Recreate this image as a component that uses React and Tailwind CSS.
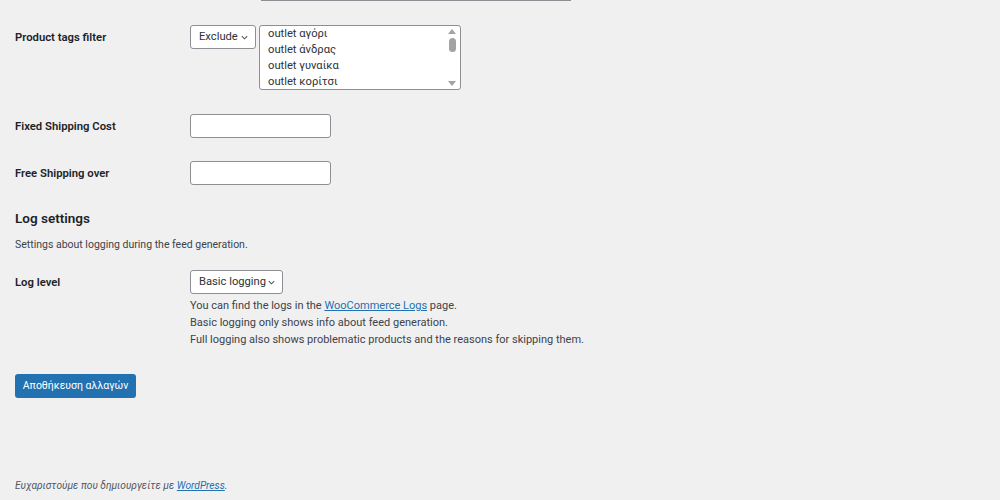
import React from 'react';

const font = { fontFamily: 'Roboto, "Open Sans", sans-serif' };

const Chevron = () => (
  <svg width="9" height="9" viewBox="0 0 20 20" className="shrink-0">
    <path d="M4 7l6 6 6-6" fill="none" stroke="#50575e" strokeWidth="2.4" />
  </svg>
);

const Select = ({ label, width }) => (
  <div
    className={`flex items-center justify-between h-6 pl-2 pr-[6px] bg-white border border-[#8c8f94] rounded-[3px] text-[11.2px] text-[#2c3338] whitespace-nowrap ${width}`}
  >
    <span>{label}</span>
    <Chevron />
  </div>
);

const Row = ({ label, children, className = '' }) => (
  <div className={`flex ${className}`}>
    <div className="w-[175px] shrink-0 text-[11.3px] font-semibold text-[#1d2327] leading-[26px]">{label}</div>
    <div className="flex-1">{children}</div>
  </div>
);

const tags = ['outlet αγόρι', 'outlet άνδρας', 'outlet γυναίκα', 'outlet κορίτσι'];

export default function App() {
  return (
    <div className="w-[1000px] h-[500px] bg-[#f0f0f1] overflow-hidden relative text-[#3c434a]" style={font}>
      <div className="h-px w-[310px] ml-[261px] bg-[#8c8f94]" />
      <div className="px-[15px]">
        <Row label="Product tags filter" className="mt-6">
          <div className="flex gap-[3px] items-start">
            <Select label="Exclude" width="w-[66px]" />
            <div className="w-[202px] h-[65px] bg-white border border-[#8c8f94] rounded-[3px] flex">
              <div className="flex-1 pl-2 text-[11.2px] text-[#2c3338] leading-4">
                {tags.map((t) => (
                  <div key={t}>{t}</div>
                ))}
              </div>
              <div className="w-[12px] mr-[2px] flex flex-col items-center py-[3px]">
                <div className="w-0 h-0 border-l-[4px] border-r-[4px] border-b-[5px] border-l-transparent border-r-transparent border-b-[#a3a3a3]" />
                <div className="w-[7px] h-[14px] rounded-full bg-[#a3a3a3] mt-[4px]" />
                <div className="flex-1" />
                <div className="w-0 h-0 border-l-[4px] border-r-[4px] border-t-[5px] border-l-transparent border-r-transparent border-t-[#a3a3a3]" />
              </div>
            </div>
          </div>
        </Row>

        <Row label="Fixed Shipping Cost" className="mt-6">
          <div className="w-[141px] h-6 bg-white border border-[#8c8f94] rounded-[3px]" />
        </Row>

        <Row label="Free Shipping over" className="mt-[21px]">
          <div className="w-[141px] h-6 bg-white border border-[#8c8f94] rounded-[3px]" />
        </Row>

        <h2 className="mt-[21px] text-[13.5px] font-semibold text-[#1d2327] leading-5">Log settings</h2>
        <p className="mt-[9px] text-[10.5px] leading-4">Settings about logging during the feed generation.</p>

        <Row label="Log level" className="mt-[17px]">
          <Select label="Basic logging" width="w-[93px]" />
          <div className="mt-[3px] text-[11px] leading-[17px] text-[#3c434a]">
            <p>
              You can find the logs in the{' '}
              <a href="#" className="text-[#2271b1] underline">WooCommerce Logs</a> page.
            </p>
            <p>Basic logging only shows info about feed generation.</p>
            <p>Full logging also shows problematic products and the reasons for skipping them.</p>
          </div>
        </Row>

        <button className="mt-[26px] h-6 w-[121px] bg-[#2271b1] text-white text-[10.5px] rounded-[3px] leading-6">
          Αποθήκευση αλλαγών
        </button>
      </div>

      <p className="absolute left-[15px] top-[478px] text-[10.2px] italic text-[#50575e] leading-4">
        Ευχαριστούμε που δημιουργείτε με{' '}
        <a href="#" className="text-[#2271b1] underline">WordPress</a>.
      </p>
    </div>
  );
}
